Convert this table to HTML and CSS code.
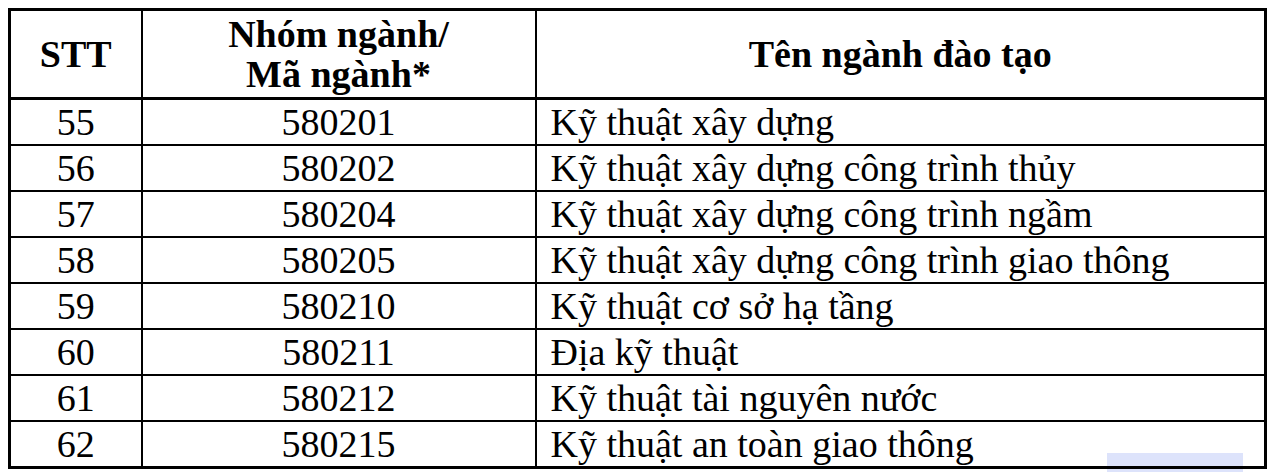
FILE: index.html
```html
<!DOCTYPE html>
<html lang="vi">
<head>
<meta charset="utf-8">
<title>Danh sách ngành</title>
<link rel="stylesheet" href="styles.css">
</head>
<body>
<div class="page">
  <table class="majors">
    <colgroup>
      <col class="c-stt">
      <col class="c-code">
      <col class="c-name">
    </colgroup>
    <thead>
      <tr>
        <th>STT</th>
        <th>Nhóm ngành/<br>Mã ngành*</th>
        <th>Tên ngành đào tạo</th>
      </tr>
    </thead>
    <tbody>
      <tr><td class="num">55</td><td class="num">580201</td><td class="name">Kỹ thuật xây dựng</td></tr>
      <tr><td class="num">56</td><td class="num">580202</td><td class="name">Kỹ thuật xây dựng công trình thủy</td></tr>
      <tr><td class="num">57</td><td class="num">580204</td><td class="name">Kỹ thuật xây dựng công trình ngầm</td></tr>
      <tr><td class="num">58</td><td class="num">580205</td><td class="name">Kỹ thuật xây dựng công trình giao thông</td></tr>
      <tr><td class="num">59</td><td class="num">580210</td><td class="name">Kỹ thuật cơ sở hạ tầng</td></tr>
      <tr><td class="num">60</td><td class="num">580211</td><td class="name">Địa kỹ thuật</td></tr>
      <tr><td class="num">61</td><td class="num">580212</td><td class="name">Kỹ thuật tài nguyên nước</td></tr>
      <tr><td class="num">62</td><td class="num">580215</td><td class="name">Kỹ thuật an toàn giao thông</td></tr>
    </tbody>
  </table>
  <div class="selection"></div>
</div>
</body>
</html>
```
FILE: styles.css
```css
html, body {
  margin: 0;
  padding: 0;
  background: #ffffff;
}

.page {
  position: relative;
  width: 1276px;
  height: 472px;
  padding: 8px 0 0 8px;
  box-sizing: border-box;
}

.majors {
  border-collapse: collapse;
  border: 3px solid #000;
  font-family: "Liberation Serif", "Times New Roman", serif;
  color: #000;
  table-layout: fixed;
  width: 1259px;
  position: relative;
  z-index: 1;
}

.c-stt { width: 132px; }
.c-code { width: 394px; }
.c-name { width: auto; }

.majors th,
.majors td {
  border: 2px solid #000;
  padding: 0;
}

.majors th {
  height: 86px;
  font-weight: bold;
  font-size: 38px;
  line-height: 40px;
  text-align: center;
  vertical-align: middle;
  border-bottom-width: 3px;
}

.majors td {
  height: 44px;
  font-size: 38px;
  line-height: 40px;
  vertical-align: middle;
}

.majors td.num {
  text-align: center;
}

.majors td.name {
  text-align: left;
  padding-left: 14px;
}

.selection {
  position: absolute;
  left: 1107px;
  top: 453px;
  width: 136px;
  height: 19px;
  background: #dde3fb;
  z-index: 0;
}
```
